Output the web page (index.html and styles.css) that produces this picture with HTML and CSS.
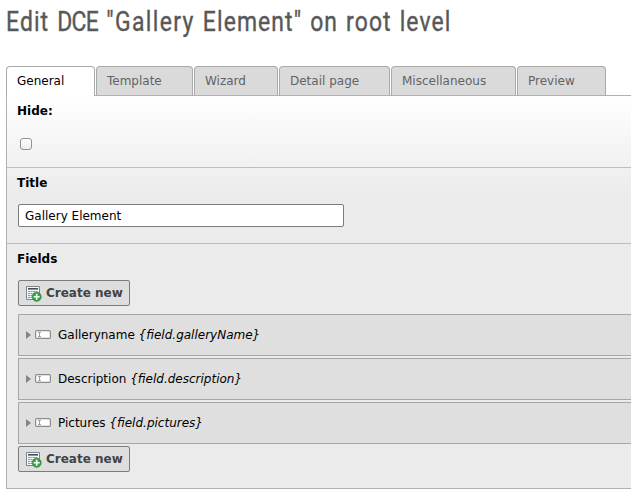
FILE: index.html
```html
<!DOCTYPE html>
<html lang="en">
<head>
<meta charset="utf-8">
<title>Edit DCE</title>
<link rel="stylesheet" href="styles.css">
</head>
<body>
<svg class="defs" width="0" height="0">
  <symbol id="new" viewBox="0 0 16 16">
    <path fill="#f4f6f7" stroke="#7c868e" d="M.5 .5h13v13H.5z"/>
    <path fill="#46505c" d="M2 2h10v1.6H2z"/>
    <path stroke="#8c949c" stroke-dasharray="2 .5" d="M2 5.5h10M2 7.5h10M2 9.5h10M2 11.5h10"/>
    <circle cx="10.7" cy="10.8" r="4.5" fill="#36a344" stroke="#238334" stroke-width=".7"/>
    <path stroke="#fff" stroke-width="1.6" d="M10.7 7.8v6M7.7 10.8h6"/>
  </symbol>
  <symbol id="field" viewBox="0 0 16 9">
    <rect x=".6" y=".6" width="14.8" height="7.8" rx="1.3" fill="#fff" stroke="#8b8b8b" stroke-width="1.2"/>
    <path fill="none" stroke="#888" stroke-width=".8" d="M3 2.4h3M3 6.6h3M4.5 2.4v4.2"/>
  </symbol>
</svg>
<h1 class="title"><span>Edit <b class="acronym">DCE</b> <b class="record">"Gallery</b> Element" on root level</span></h1>
<nav class="tabs">
  <div class="tab active general"><span>General</span></div>
  <div class="tab template"><span>Template</span></div>
  <div class="tab wizard"><span>Wizard</span></div>
  <div class="tab detail"><span>Detail page</span></div>
  <div class="tab misc"><span>Miscellaneous</span></div>
  <div class="tab preview"><span>Preview</span></div>
</nav>
<main class="panel">
  <section class="section hide">
    <h2>Hide:</h2>
    <input class="check" type="checkbox">
  </section>
  <section class="section name">
    <h2>Title</h2>
    <input class="text" type="text" value="Gallery Element">
  </section>
  <section class="section fields">
    <h2>Fields</h2>
    <button class="create"><svg width="16" height="16"><use href="#new"/></svg><span>Create new</span></button>
    <div class="list">
      <div class="row"><i class="arrow"></i><svg width="16" height="9"><use href="#field"/></svg><span>Galleryname <em>{field.galleryName}</em></span></div>
      <div class="row"><i class="arrow"></i><svg width="16" height="9"><use href="#field"/></svg><span>Description <em>{field.description}</em></span></div>
      <div class="row"><i class="arrow"></i><svg width="16" height="9"><use href="#field"/></svg><span>Pictures <em>{field.pictures}</em></span></div>
    </div>
    <button class="create"><svg width="16" height="16"><use href="#new"/></svg><span>Create new</span></button>
  </section>
</main>
</body>
</html>
```
FILE: styles.css
```css
* { box-sizing: border-box; }
body {
  margin: 0;
  height: 496px;
  overflow: hidden;
  background: #fff;
  color: #000;
  font: 12px/16px Verdana, "DejaVu Sans", sans-serif;
}
.defs { display: block; width: 0; height: 0; }
.title {
  margin: 0;
  height: 66px;
  padding: 5px 0 0 6px;
  color: #585858;
  font: 400 28px/34px Roboto, sans-serif;
  -webkit-text-stroke: .4px #585858;
  letter-spacing: 1.35px;
  word-spacing: 1.5px;
  white-space: nowrap;
}
.title span { display: inline-block; transform: scaleX(.818); transform-origin: 0 0; }
.title b { font-weight: inherit; }
.title .acronym { letter-spacing: -.8px; }
.title .record { letter-spacing: 1.7px; }
.tabs { display: flex; gap: 1px; height: 29px; padding-left: 6px; }
.tab {
  height: 29px;
  padding: 6px 0 0 10px;
  border: 1px solid #a9a9a9;
  border-bottom: 0;
  border-radius: 4px 4px 0 0;
  background: #dadada;
  color: #636363;
  white-space: nowrap;
}
.tab.active { height: 30px; background: #fff; color: #000; position: relative; z-index: 1; }
.general { width: 89px; }
.template { width: 97px; }
.wizard { width: 84px; }
.detail { width: 111px; }
.misc { width: 125px; }
.preview { width: 89px; }
.panel {
  height: 394px;
  margin-left: 6px;
  border: 1px solid #b0b0b0;
  border-right: 0;
  background: linear-gradient(#fff, #ebebeb 100px);
}
.section { padding-left: 11px; border-bottom: 1px solid #bdbdbd; }
.section:last-child { border-bottom: 0; }
h2 { margin: 0 0 0 -1px; font: bold 12px/16px Verdana, "DejaVu Sans", sans-serif; }
.hide { height: 72px; padding-top: 7px; }
.name { height: 76px; padding-top: 7px; }
.fields { padding-top: 7px; }
.check {
  display: block;
  appearance: none;
  width: 12px;
  height: 12px;
  margin: 19px 0 0 2px;
  border: 1px solid #929292;
  border-radius: 3px;
  background: linear-gradient(#fff, #ededed);
}
.text {
  display: block;
  width: 326px;
  height: 23px;
  margin: 13px 0 0;
  padding: 0 6px;
  border: 1px solid #7c7c7c;
  border-radius: 2px;
  background: #fff;
  color: #000;
  font: 12px Verdana, "DejaVu Sans", sans-serif;
}
.create {
  display: flex;
  align-items: center;
  gap: 4px;
  width: 112px;
  height: 26px;
  margin: 0;
  padding: 0 0 0 7px;
  border: 1px solid #7c7c7c;
  border-radius: 2px;
  background: #dedede;
  color: #434343;
  font: bold 12px/16px Verdana, "DejaVu Sans", sans-serif;
  white-space: nowrap;
}
.create svg { margin-top: 2px; }
h2 + .create { margin-top: 13px; }
.list { display: grid; gap: 2px; padding: 8px 0 2px; }
.row {
  display: flex;
  align-items: center;
  height: 42px;
  padding-left: 7px;
  border: 1px solid #a7a7a7;
  border-right: 0;
  background: #dfdfdf;
}
.row svg { margin-bottom: 1px; }
.arrow { border: 4px solid transparent; border-left: 5px solid #8a8378; border-right: 0; margin: 0 4px 1px 0; }
.row span { margin-left: 7px; white-space: nowrap; }
```
